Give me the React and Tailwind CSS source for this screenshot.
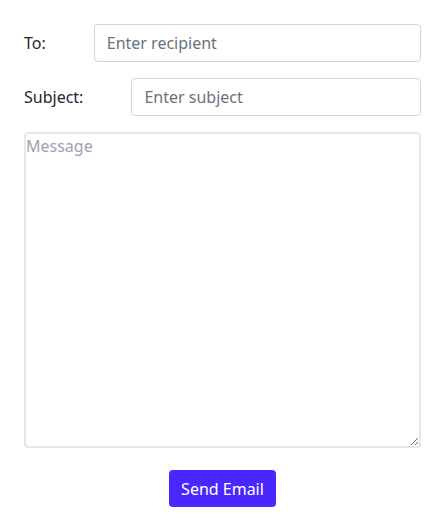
const Field = ({ label, placeholder }) => (
  <div className="flex items-center gap-12">
    <label className="text-base text-[#1f2430]">{label}</label>
    <input
      type="text"
      placeholder={placeholder}
      className="flex-1 h-[38px] px-3 border border-[#d1d5db] rounded text-base outline-none placeholder:text-[#6b7280]"
    />
  </div>
);

const App = () => {
  return (
    <div className="min-h-screen bg-white p-6 font-['Noto_Sans',sans-serif]">
      <div className="flex flex-col gap-4">
        <Field label="To:" placeholder="Enter recipient" />
        <Field label="Subject:" placeholder="Enter subject" />
        <textarea
          placeholder="Message"
          className="h-[316px] border-2 border-[#e5e7eb] rounded text-base outline-none placeholder:text-[#9ca3af]"
        />
      </div>
      <div className="flex justify-center mt-[22px]">
        <button className="h-[37px] px-3 bg-[#4b27ff] text-white text-base rounded">
          Send Email
        </button>
      </div>
    </div>
  );
};

export default App;
